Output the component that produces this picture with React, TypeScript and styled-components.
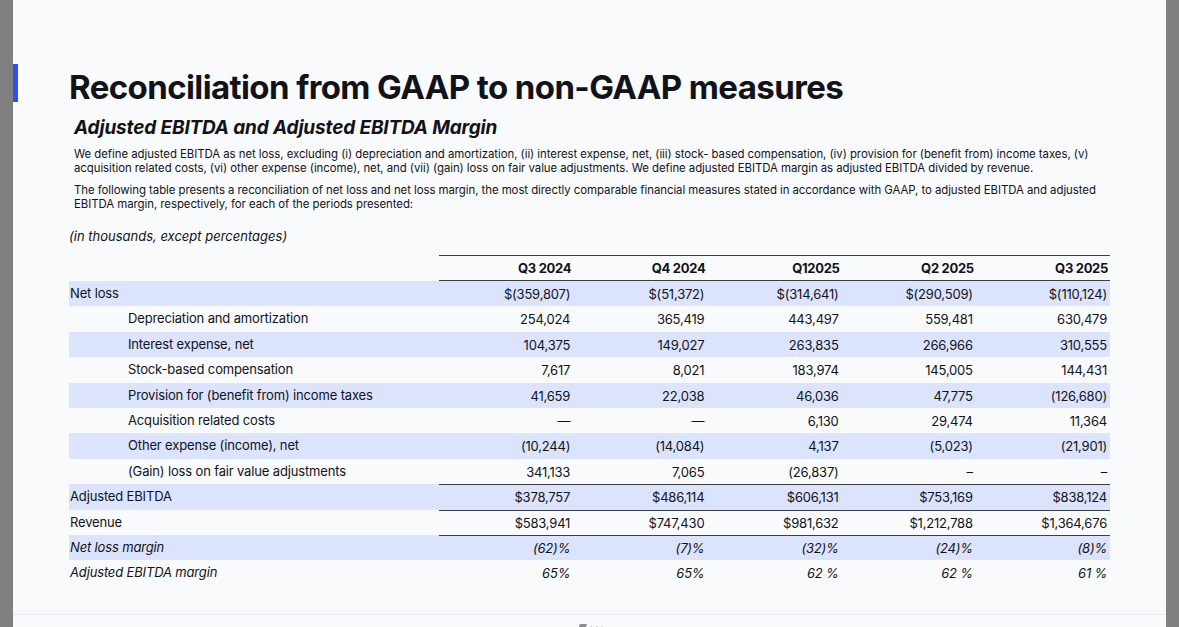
import React from 'react';
import styled, { createGlobalStyle } from 'styled-components';

const GlobalStyle = createGlobalStyle`
  html, body {
    margin: 0;
    padding: 0;
    background: #808080;
    overflow: hidden;
  }
  body {
    font-family: Inter, "Liberation Sans", sans-serif;
    color: #111318;
  }
`;

const Page = styled.div`
  margin: 0 13px;
  height: 627px;
  background: #f9fafc;
  display: flex;
  flex-direction: column;
  overflow: hidden;
`;

const TitleRow = styled.div`
  display: flex;
  align-items: flex-start;
  padding-top: 64px;
`;

const Accent = styled.div`
  width: 5px;
  height: 38px;
  background: #2f4ef2;
`;

const Title = styled.h1`
  margin: 3px 0 0 51px;
  font-size: 33px;
  line-height: 40px;
  font-weight: 700;
  letter-spacing: -0.6px;
`;

const Body = styled.div`
  padding-left: 56px;
`;

const Subtitle = styled.h2`
  margin: 9px 0 0 5px;
  font-size: 19px;
  line-height: 24px;
  font-weight: 700;
  font-style: italic;
  letter-spacing: -0.15px;
`;

const Paragraph = styled.p<{ gap: number }>`
  margin: ${p => p.gap}px 0 0 5px;
  font-size: 11.4px;
  line-height: 14px;
  letter-spacing: -0.05px;
  white-space: nowrap;
`;

const Units = styled.div`
  margin-top: 16px;
  font-size: 13px;
  line-height: 18px;
  font-style: italic;
`;

const Table = styled.div`
  margin-top: 10px;
  width: 1041px;
  font-size: 13px;
`;

const Row = styled.div<{ shaded?: boolean }>`
  display: flex;
  background: ${p => (p.shaded ? '#dbe3fd' : 'transparent')};
`;

const Label = styled.div<{ indent?: boolean; italic?: boolean }>`
  width: 370px;
  flex-shrink: 0;
  box-sizing: border-box;
  height: 25.4px;
  line-height: 25px;
  padding-left: ${p => (p.indent ? 59 : 1)}px;
  font-style: ${p => (p.italic ? 'italic' : 'normal')};
  letter-spacing: -0.15px;
`;

const Cell = styled.div<{ lineTop?: boolean; italic?: boolean }>`
  flex: 1;
  box-sizing: border-box;
  height: 25.4px;
  line-height: 24px;
  text-align: right;
  padding-right: 3px;
  border-top: 1px solid ${p => (p.lineTop ? '#3a3d45' : 'transparent')};
  font-style: ${p => (p.italic ? 'italic' : 'normal')};
  letter-spacing: -0.2px;
`;

const HeadLabel = styled.div`
  width: 370px;
  flex-shrink: 0;
`;

const HeadCell = styled.div`
  flex: 1;
  height: 24px;
  line-height: 25px;
  text-align: right;
  padding-right: 2px;
  font-weight: 700;
  border-top: 1px solid #3a3d45;
  border-bottom: 1px solid #3a3d45;
  letter-spacing: -0.3px;
`;

const Footer = styled.div`
  margin-top: auto;
  height: 13px;
  border-top: 1px solid #e6e8ee;
  display: flex;
  justify-content: center;
  padding-top: 9px;
  box-sizing: border-box;
  overflow: visible;
`;

const periods = ['Q3 2024', 'Q4 2024', 'Q12025', 'Q2 2025', 'Q3 2025'];

type Line = {
  label: string;
  values: string[];
  indent?: boolean;
  italic?: boolean;
  lineTop?: boolean;
};

const lines: Line[] = [
  { label: 'Net loss', values: ['$(359,807)', '$(51,372)', '$(314,641)', '$(290,509)', '$(110,124)'] },
  { label: 'Depreciation and amortization', indent: true, values: ['254,024', '365,419', '443,497', '559,481', '630,479'] },
  { label: 'Interest expense, net', indent: true, values: ['104,375', '149,027', '263,835', '266,966', '310,555'] },
  { label: 'Stock-based compensation', indent: true, values: ['7,617', '8,021', '183,974', '145,005', '144,431'] },
  { label: 'Provision for (benefit from) income taxes', indent: true, values: ['41,659', '22,038', '46,036', '47,775', '(126,680)'] },
  { label: 'Acquisition related costs', indent: true, values: ['—', '—', '6,130', '29,474', '11,364'] },
  { label: 'Other expense (income), net', indent: true, values: ['(10,244)', '(14,084)', '4,137', '(5,023)', '(21,901)'] },
  { label: '(Gain) loss on fair value adjustments', indent: true, values: ['341,133', '7,065', '(26,837)', '–', '–'] },
  { label: 'Adjusted EBITDA', lineTop: true, values: ['$378,757', '$486,114', '$606,131', '$753,169', '$838,124'] },
  { label: 'Revenue', lineTop: true, values: ['$583,941', '$747,430', '$981,632', '$1,212,788', '$1,364,676'] },
  { label: 'Net loss margin', italic: true, lineTop: true, values: ['(62)%', '(7)%', '(32)%', '(24)%', '(8)%'] },
  { label: 'Adjusted EBITDA margin', italic: true, values: ['65%', '65%', '62 %', '62 %', '61 %'] },
];

const Logo = () => (
  <svg width="28" height="10" viewBox="0 0 28 10">
    <polygon points="0,10 4,0 11,0 7,10" fill="#8a8c92" />
    <polygon points="12,10 15,2 18,10" fill="#2a2c33" />
    <polygon points="18,10 21,2 24,10" fill="#2a2c33" />
    <polygon points="23,10 26,2 28,10" fill="#2a2c33" />
  </svg>
);

export default function App() {
  return (
    <>
      <GlobalStyle />
      <Page>
        <TitleRow>
          <Accent />
          <Title>Reconciliation from GAAP to non-GAAP measures</Title>
        </TitleRow>
        <Body>
          <Subtitle>Adjusted EBITDA and Adjusted EBITDA Margin</Subtitle>
          <Paragraph gap={7}>
            We define adjusted EBITDA as net loss, excluding (i) depreciation and amortization, (ii) interest expense, net, (iii) stock- based compensation, (iv) provision for (benefit from) income taxes, (v)
            <br />
            acquisition related costs, (vi) other expense (income), net, and (vii) (gain) loss on fair value adjustments. We define adjusted EBITDA margin as adjusted EBITDA divided by revenue.
          </Paragraph>
          <Paragraph gap={8}>
            The following table presents a reconciliation of net loss and net loss margin, the most directly comparable financial measures stated in accordance with GAAP, to adjusted EBITDA and adjusted
            <br />
            EBITDA margin, respectively, for each of the periods presented:
          </Paragraph>
          <Units>(in thousands, except percentages)</Units>
          <Table>
            <Row>
              <HeadLabel />
              {periods.map(p => (
                <HeadCell key={p}>{p}</HeadCell>
              ))}
            </Row>
            {lines.map((line, i) => (
              <Row key={line.label} shaded={i % 2 === 0}>
                <Label indent={line.indent} italic={line.italic}>
                  {line.label}
                </Label>
                {line.values.map((v, j) => (
                  <Cell key={j} lineTop={line.lineTop} italic={line.italic}>
                    {v}
                  </Cell>
                ))}
              </Row>
            ))}
          </Table>
        </Body>
        <Footer>
          <Logo />
        </Footer>
      </Page>
    </>
  );
}
